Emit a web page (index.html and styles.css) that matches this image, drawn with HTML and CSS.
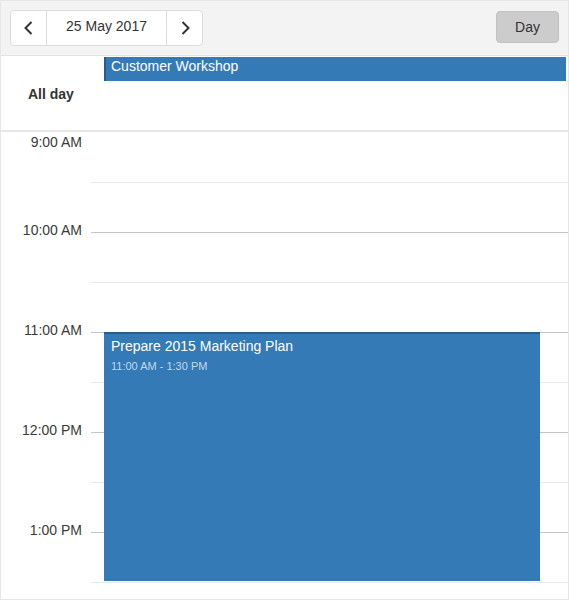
FILE: index.html
```html
<!DOCTYPE html>
<html>
<head>
<meta charset="utf-8">
<link rel="stylesheet" href="styles.css">
</head>
<body>
<div class="scheduler">
  <div class="toolbar">
    <div class="nav">
      <div class="nav-btn">
        <svg width="12" height="16" viewBox="0 0 12 16"><polyline points="8.5,2 2.5,8 8.5,14" fill="none" stroke="#333" stroke-width="2"/></svg>
      </div>
      <div class="nav-date">25 May 2017</div>
      <div class="nav-btn nav-next">
        <svg width="12" height="16" viewBox="0 0 12 16"><polyline points="3.5,2 9.5,8 3.5,14" fill="none" stroke="#333" stroke-width="2"/></svg>
      </div>
    </div>
    <div class="view-btn">Day</div>
  </div>
  <div class="allday">
    <div class="allday-label">All day</div>
    <div class="allday-cell">
      <div class="allday-event">Customer Workshop</div>
    </div>
  </div>
  <div class="grid">
    <div class="times">
      <div class="time first">9:00 AM</div>
      <div class="time">10:00 AM</div>
      <div class="time">11:00 AM</div>
      <div class="time">12:00 PM</div>
      <div class="time">1:00 PM</div>
    </div>
    <div class="slots">
      <div class="slot first"></div>
      <div class="slot half"></div>
      <div class="slot hour"></div>
      <div class="slot half"></div>
      <div class="slot hour"></div>
      <div class="slot half"></div>
      <div class="slot hour"></div>
      <div class="slot half"></div>
      <div class="slot hour"></div>
      <div class="slot half"></div>
      <div class="event">
        <div class="event-title">Prepare 2015 Marketing Plan</div>
        <div class="event-time">11:00 AM - 1:30 PM</div>
      </div>
    </div>
  </div>
</div>
</body>
</html>
```

FILE: styles.css
```css
* { box-sizing: border-box; }
html, body { margin: 0; padding: 0; background: #fff; }
body { font-family: "Liberation Sans", Arial, sans-serif; font-size: 14px; color: #333; }

.scheduler {
  width: 569px;
  height: 600px;
  border: 1px solid #e6e6e6;
  display: flex;
  flex-direction: column;
  overflow: hidden;
}

.toolbar {
  flex: none;
  height: 55px;
  background: #f3f3f3;
  border-bottom: 1px solid #e2e2e2;
  display: flex;
  justify-content: space-between;
  align-items: flex-start;
  padding: 9px 9px 0 9px;
}

.nav {
  display: flex;
  height: 36px;
  border: 1px solid #dcdcdc;
  border-radius: 4px;
  background: #fff;
}
.nav-btn {
  width: 36px;
  display: flex;
  align-items: center;
  justify-content: center;
  border-right: 1px solid #dcdcdc;
}
.nav-btn.nav-next { border-right: none; width: 35px; }
.nav-date {
  width: 120px;
  border-right: 1px solid #dcdcdc;
  text-align: center;
  line-height: 16px;
  padding-top: 7px;
  color: #333;
}

.view-btn {
  margin-top: 1px;
  width: 63px;
  height: 32px;
  background: #cccccc;
  border: 1px solid #c2c2c2;
  border-radius: 4px;
  text-align: center;
  line-height: 30px;
  color: #333;
}

.allday {
  flex: none;
  height: 76px;
  display: flex;
  border-bottom: 2px solid #e6e6e6;
}
.allday-label {
  width: 90px;
  display: flex;
  align-items: center;
  padding-left: 27px;
  font-weight: bold;
  padding-top: 2px;
}
.allday-cell {
  flex: 1;
  padding: 1px 2px 0 13px;
}
.allday-event {
  height: 24px;
  background: #337ab7;
  border-left: 2px solid #275d8c;
  color: #fff;
  line-height: 16px;
  padding: 1px 0 0 5px;
}

.grid {
  flex: 1;
  display: flex;
  overflow: hidden;
}
.times {
  width: 90px;
  flex: none;
}
.time {
  height: 100px;
  text-align: right;
  padding-right: 9px;
  line-height: 16px;
  color: #3a3a3a;
}
.time.first {
  height: 90px;
  padding-top: 2px;
}

.slots {
  flex: 1;
  position: relative;
}
.slot {
  height: 50px;
  border-top: 1px solid #e8e8e8;
}
.slot.first { border-top: none; }
.slot.hour { border-top-color: #c4c4c4; }

.event {
  position: absolute;
  top: 200px;
  left: 13px;
  width: 436px;
  height: 249px;
  background: #337ab7;
  border-top: 2px solid #275d8c;
  padding: 4px 7px 0 7px;
  color: #fff;
}
.event-title { line-height: 16px; font-size: 14px; }
.event-time {
  font-size: 11px;
  line-height: 13px;
  margin-top: 6px;
  color: #c3d6e9;
}
```
